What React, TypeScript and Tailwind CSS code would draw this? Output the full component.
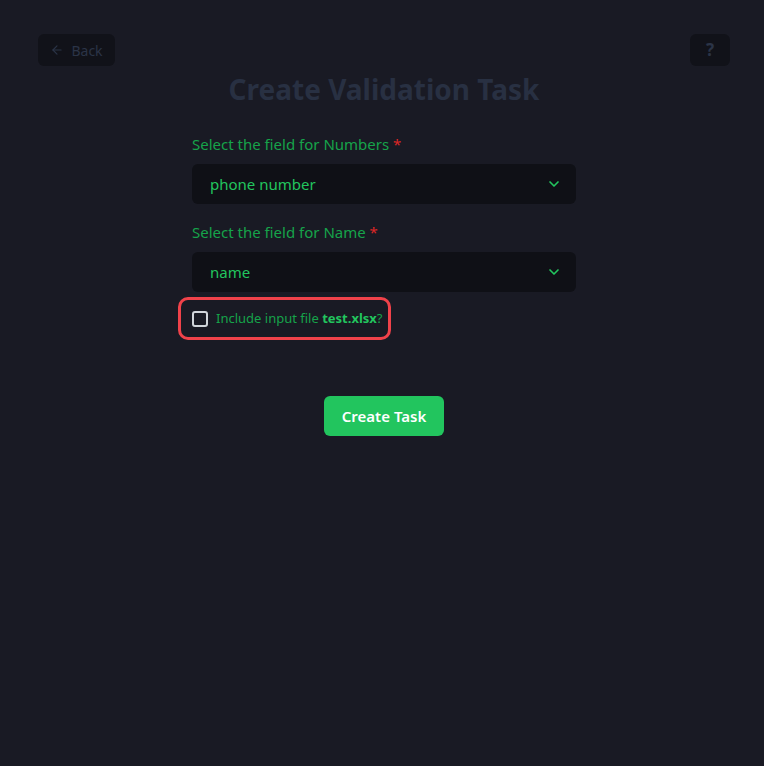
import { ArrowLeft, ChevronDown } from "lucide-react";

const font = { fontFamily: '"Noto Sans", "Open Sans", sans-serif' };

function SelectField({ label, value }: { label: string; value: string }) {
  return (
    <div className="flex flex-col">
      <label className="text-[15px] leading-[20px] text-[#16a34a] mb-[10px]">
        {label} <span className="text-[#dc2626]">*</span>
      </label>
      <div className="h-10 rounded-md bg-[#0f1016] flex items-center justify-between pl-[18px] pr-[14px]">
        <span className="text-[15px] text-[#22c55e]">{value}</span>
        <ChevronDown className="w-4 h-4 text-[#22c55e]" strokeWidth={2.5} />
      </div>
    </div>
  );
}

export default function App() {
  return (
    <div className="h-screen w-screen overflow-hidden bg-[#191a24] pl-[4px]" style={font}>
      <div className="flex justify-between px-[34px] pt-[34px]">
        <button className="h-8 w-[77px] rounded-md bg-[#111219] flex items-center justify-center gap-[7px] text-[#2b3447] text-[14px]">
          <ArrowLeft className="w-[14px] h-[14px]" strokeWidth={2} />
          Back
        </button>
        <button className="h-8 w-10 rounded-md bg-[#111219] flex items-center justify-center text-[#2b3447] text-[17px] font-bold">
          ?
        </button>
      </div>

      <h1 className="text-center text-[28px] font-bold leading-[36px] text-[#283042] mt-[5px]">
        Create Validation Task
      </h1>

      <div className="w-96 mx-auto mt-[27px] flex flex-col gap-[8px]">
        <SelectField label="Select the field for Numbers" value="phone number" />
        <div className="mt-[10px]">
          <SelectField label="Select the field for Name" value="name" />
        </div>
        <div className="-ml-[14px] mt-[-3px] self-start rounded-[10px] border-[3px] border-[#f0424a] h-[43px] w-[213px] flex items-center pl-[11px] gap-2">
          <span className="w-4 h-4 rounded-[3px] border-2 border-[#d1d5db] bg-transparent" />
          <span className="text-[13px] text-[#16a34a]">
            Include input file <b className="font-bold text-[#22c55e]">test.xlsx</b>?
          </span>
        </div>
      </div>

      <div className="flex justify-center mt-[56px]">
        <button className="h-10 w-[120px] rounded-md bg-[#22c55e] text-white text-[15px] font-semibold">
          Create Task
        </button>
      </div>
    </div>
  );
}
